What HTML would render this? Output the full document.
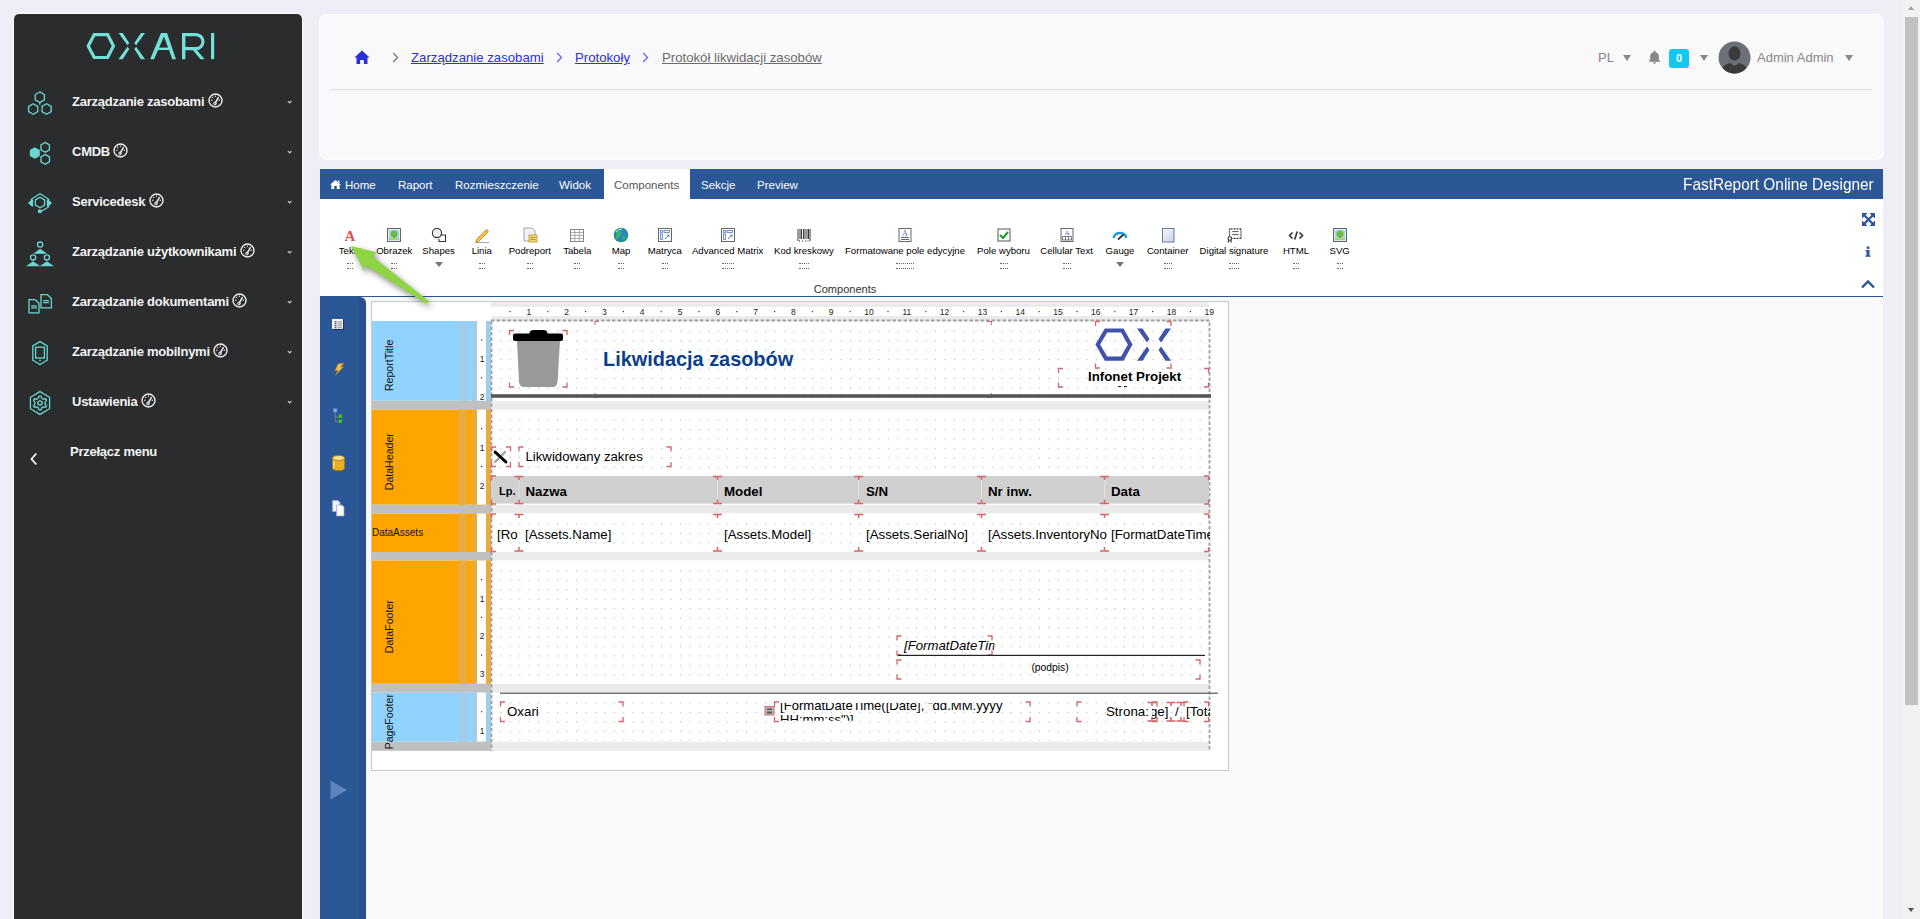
<!DOCTYPE html>
<html><head><meta charset="utf-8">
<style>
*{margin:0;padding:0;box-sizing:border-box}
html,body{width:1920px;height:919px;overflow:hidden;background:#eeeef7;font-family:"Liberation Sans",sans-serif}
.a{position:absolute;white-space:nowrap}
#side{position:absolute;left:14px;top:14px;width:288px;height:920px;background:#2b2c2e;border-radius:5px;box-shadow:0 0 0 1px #fff}
.mi{position:absolute;left:58px;color:#f4f4f4;font-weight:bold;font-size:13px;letter-spacing:-0.25px}
.chev{position:absolute;left:273.5px;width:3.4px;height:3.4px;border-right:1.4px solid #ddd;border-bottom:1.4px solid #ddd;transform:rotate(45deg)}
.ic{position:absolute;left:12px}
.gauge{display:inline-block;vertical-align:-2px;margin-left:0px}
#card{position:absolute;left:320px;top:15px;width:1563px;height:144px;background:#f9f9fb;border-radius:7px;box-shadow:0 0 0 1px #fff}
#bar{position:absolute;left:320px;top:169px;width:1563px;height:30px;background:#2b5797}
.tab{position:absolute;top:1px;height:30px;line-height:30px;color:#fff;font-size:11.5px;white-space:nowrap}
.bc{font-size:13.2px;text-decoration:underline;text-underline-offset:1px}
.tr{font-size:13px;color:#888}
.tri{width:0;height:0;border-left:4px solid transparent;border-right:4px solid transparent;border-top:6px solid #888}
#tb{position:absolute;left:320px;top:199px;width:1563px;height:98px;background:#fff;border-bottom:1px solid #2b5797}
#des{position:absolute;left:320px;top:297px;width:1563px;height:622px;background:#f9f9f9}
#strip{position:absolute;left:320px;top:297px;width:46px;height:622px;background:#2b5797;border-top-right-radius:6px;border-right:7px solid #28508d}
.tl{position:absolute;font-size:9.6px;color:#000;text-align:center;white-space:nowrap}
.dots{position:absolute;height:6px;border-top:1px dotted #666;border-bottom:1px dotted #666}
#sb{position:absolute;left:1903px;top:0;width:17px;height:919px;background:#f1f1f1}
</style></head><body>

<!-- SIDEBAR -->
<div id="side">
  <svg class="a" style="left:0;top:0" width="288" height="60" viewBox="14 14 288 60">
    <g fill="#74e0da">
      <polygon points="94.3,34.6 107.6,34.6 113.5,46 107.6,57.5 94.3,57.5 88.2,46" fill="none" stroke="#74e0da" stroke-width="3.2"/>
      <polygon points="118.5,33 122.7,33 129.3,43 127.5,45.3"/>
      <polygon points="127.5,46.7 129.3,49 122.7,59.2 118.5,59.2"/>
      <polygon points="145.1,33 140.9,33 134.3,43 136.1,45.3"/>
      <polygon points="136.1,46.7 134.3,49 140.9,59.2 145.1,59.2"/>
      <polygon points="161,33 167,33 176,59.2 172.3,59.2 164,36.5 154,59.2 150.2,59.2"/>
      <rect x="156" y="47.6" width="14" height="2.4"/>
      <path d="M182,33 h14 a8.6,8.6 0 0 1 0,17.2 h-10.6 v9 h-3.4 z M185.4,36.2 v10.8 h10.6 a5.4,5.4 0 0 0 0,-10.8 z" fill-rule="evenodd"/>
      <polygon points="192,49 196,49 204.6,59.2 200.4,59.2"/>
      <rect x="211" y="33" width="3.2" height="26.2"/>
    </g>
  </svg>

  <!-- icons -->
  <svg class="a" style="left:0;top:0" width="288" height="460" viewBox="14 14 288 460" fill="none" stroke="#6ad8d2" stroke-width="1.3">
    <g>
      <polygon points="39.80,91.90 44.39,94.55 44.39,99.85 39.80,102.50 35.21,99.85 35.21,94.55"/>
      <polygon points="33.20,103.70 37.79,106.35 37.79,111.65 33.20,114.30 28.61,111.65 28.61,106.35"/>
      <polygon points="46.60,103.70 51.19,106.35 51.19,111.65 46.60,114.30 42.01,111.65 42.01,106.35"/>
      <path d="M39.8,102.5 v2.3"/>
    </g>
    <g>
      <polygon points="34.80,148.00 39.13,150.50 39.13,155.50 34.80,158.00 30.47,155.50 30.47,150.50" fill="#6ad8d2"/>
      <polygon points="45.20,142.40 49.44,144.85 49.44,149.75 45.20,152.20 40.96,149.75 40.96,144.85"/>
      <polygon points="45.20,154.40 49.44,156.85 49.44,161.75 45.20,164.20 40.96,161.75 40.96,156.85"/>
    </g>
    <g>
      <path d="M31.5,204 V199 L40,193.8 L48.5,199 V207 L41,211.5"/>
      <polygon points="28,203 31.8,199.6 33.2,199.6 33.2,206.4 31.8,206.4" fill="#6ad8d2" stroke="none"/>
      <polygon points="52,203 48.2,199.6 46.8,199.6 46.8,206.4 48.2,206.4" fill="#6ad8d2" stroke="none"/>
      <polygon points="40.00,197.20 44.59,199.85 44.59,205.15 40.00,207.80 35.41,205.15 35.41,199.85"/>
      <circle cx="39.8" cy="211.3" r="2" fill="#6ad8d2" stroke="none"/>
    </g>
    <g>
      <circle cx="40.1" cy="244.6" r="2.6"/>
      <path d="M35,253.2 L40.1,249.6 L45.2,253.2 Z" fill="#6ad8d2"/>
      <circle cx="33.1" cy="257.4" r="2.6"/>
      <path d="M28,265.6 L33.1,262 L38.2,265.6 Z" fill="#6ad8d2"/>
      <circle cx="46.9" cy="257.4" r="2.6"/>
      <path d="M41.8,265.6 L46.9,262 L52,265.6 Z" fill="#6ad8d2"/>
    </g>
    <g>
      <path d="M29,299.6 h6 l4,3.8 v9.4 h-10 z"/>
      <path d="M31.2,305.8 h5.6 M31.2,307.8 h5.6" stroke-width="1.2"/>
      <path d="M41,294.6 h6.2 l4.2,3.8 v9.4 h-10.4 z"/>
      <path d="M43.2,300.6 h5.8 M43.2,302.6 h5.8" stroke-width="1.2"/>
    </g>
    <g>
      <polygon points="40,341.6 47.2,345.9 47.2,360.2 40,364.5 32.8,360.2 32.8,345.9"/>
      <rect x="35.6" y="347.2" width="8.8" height="10.8"/>
      <path d="M39.2,360.5 h1.6"/>
    </g>
    <g>
      <polygon points="40,391.6 49.6,397.3 49.6,408.7 40,414.4 30.4,408.7 30.4,397.3"/>
      <path d="M39.09,396.06 L40.91,396.06 L41.91,398.38 L43.04,399.03 L45.55,398.74 L46.47,400.32 L44.96,402.35 L44.96,403.65 L46.47,405.68 L45.55,407.26 L43.04,406.97 L41.91,407.62 L40.91,409.94 L39.09,409.94 L38.09,407.62 L36.96,406.97 L34.45,407.26 L33.53,405.68 L35.04,403.65 L35.04,402.35 L33.53,400.32 L34.45,398.74 L36.96,399.03 L38.09,398.38 Z"/>
      <circle cx="40" cy="403" r="2.1"/>
    </g>
    <path d="M36.3,453.5 l-4.8,5.5 l4.8,5.5" stroke="#eee" stroke-width="1.9"/>
  </svg>
  <div class="mi" style="top:79px">Zarządzanie zasobami <svg class="gauge" width="15" height="15" viewBox="0 0 15 15"><circle cx="7.5" cy="7.5" r="6.5" fill="none" stroke="#eee" stroke-width="1.4"/><path d="M7.2,10.2 L10.3,4.6" stroke="#eee" stroke-width="1.5" stroke-linecap="round"/><circle cx="7" cy="10.5" r="1.4" fill="none" stroke="#eee" stroke-width="1"/><circle cx="3.8" cy="7.3" r="0.7" fill="#eee"/><circle cx="4.7" cy="4.5" r="0.7" fill="#eee"/><circle cx="7.5" cy="3.3" r="0.7" fill="#eee"/><circle cx="11.3" cy="7.3" r="0.7" fill="#eee"/></svg></div>
  <div class="mi" style="top:129px">CMDB <svg class="gauge" width="15" height="15" viewBox="0 0 15 15"><circle cx="7.5" cy="7.5" r="6.5" fill="none" stroke="#eee" stroke-width="1.4"/><path d="M7.2,10.2 L10.3,4.6" stroke="#eee" stroke-width="1.5" stroke-linecap="round"/><circle cx="7" cy="10.5" r="1.4" fill="none" stroke="#eee" stroke-width="1"/><circle cx="3.8" cy="7.3" r="0.7" fill="#eee"/><circle cx="4.7" cy="4.5" r="0.7" fill="#eee"/><circle cx="7.5" cy="3.3" r="0.7" fill="#eee"/><circle cx="11.3" cy="7.3" r="0.7" fill="#eee"/></svg></div>
  <div class="mi" style="top:179px">Servicedesk <svg class="gauge" width="15" height="15" viewBox="0 0 15 15"><circle cx="7.5" cy="7.5" r="6.5" fill="none" stroke="#eee" stroke-width="1.4"/><path d="M7.2,10.2 L10.3,4.6" stroke="#eee" stroke-width="1.5" stroke-linecap="round"/><circle cx="7" cy="10.5" r="1.4" fill="none" stroke="#eee" stroke-width="1"/><circle cx="3.8" cy="7.3" r="0.7" fill="#eee"/><circle cx="4.7" cy="4.5" r="0.7" fill="#eee"/><circle cx="7.5" cy="3.3" r="0.7" fill="#eee"/><circle cx="11.3" cy="7.3" r="0.7" fill="#eee"/></svg></div>
  <div class="mi" style="top:229px">Zarządzanie użytkownikami <svg class="gauge" width="15" height="15" viewBox="0 0 15 15"><circle cx="7.5" cy="7.5" r="6.5" fill="none" stroke="#eee" stroke-width="1.4"/><path d="M7.2,10.2 L10.3,4.6" stroke="#eee" stroke-width="1.5" stroke-linecap="round"/><circle cx="7" cy="10.5" r="1.4" fill="none" stroke="#eee" stroke-width="1"/><circle cx="3.8" cy="7.3" r="0.7" fill="#eee"/><circle cx="4.7" cy="4.5" r="0.7" fill="#eee"/><circle cx="7.5" cy="3.3" r="0.7" fill="#eee"/><circle cx="11.3" cy="7.3" r="0.7" fill="#eee"/></svg></div>
  <div class="mi" style="top:279px">Zarządzanie dokumentami <svg class="gauge" width="15" height="15" viewBox="0 0 15 15"><circle cx="7.5" cy="7.5" r="6.5" fill="none" stroke="#eee" stroke-width="1.4"/><path d="M7.2,10.2 L10.3,4.6" stroke="#eee" stroke-width="1.5" stroke-linecap="round"/><circle cx="7" cy="10.5" r="1.4" fill="none" stroke="#eee" stroke-width="1"/><circle cx="3.8" cy="7.3" r="0.7" fill="#eee"/><circle cx="4.7" cy="4.5" r="0.7" fill="#eee"/><circle cx="7.5" cy="3.3" r="0.7" fill="#eee"/><circle cx="11.3" cy="7.3" r="0.7" fill="#eee"/></svg></div>
  <div class="mi" style="top:329px">Zarządzanie mobilnymi <svg class="gauge" width="15" height="15" viewBox="0 0 15 15"><circle cx="7.5" cy="7.5" r="6.5" fill="none" stroke="#eee" stroke-width="1.4"/><path d="M7.2,10.2 L10.3,4.6" stroke="#eee" stroke-width="1.5" stroke-linecap="round"/><circle cx="7" cy="10.5" r="1.4" fill="none" stroke="#eee" stroke-width="1"/><circle cx="3.8" cy="7.3" r="0.7" fill="#eee"/><circle cx="4.7" cy="4.5" r="0.7" fill="#eee"/><circle cx="7.5" cy="3.3" r="0.7" fill="#eee"/><circle cx="11.3" cy="7.3" r="0.7" fill="#eee"/></svg></div>
  <div class="mi" style="top:379px">Ustawienia <svg class="gauge" width="15" height="15" viewBox="0 0 15 15"><circle cx="7.5" cy="7.5" r="6.5" fill="none" stroke="#eee" stroke-width="1.4"/><path d="M7.2,10.2 L10.3,4.6" stroke="#eee" stroke-width="1.5" stroke-linecap="round"/><circle cx="7" cy="10.5" r="1.4" fill="none" stroke="#eee" stroke-width="1"/><circle cx="3.8" cy="7.3" r="0.7" fill="#eee"/><circle cx="4.7" cy="4.5" r="0.7" fill="#eee"/><circle cx="7.5" cy="3.3" r="0.7" fill="#eee"/><circle cx="11.3" cy="7.3" r="0.7" fill="#eee"/></svg></div>
  <div class="mi" style="top:430px;left:56px">Przełącz menu</div>
  <div class="chev" style="top:85.5px"></div>
  <div class="chev" style="top:135.5px"></div>
  <div class="chev" style="top:185.5px"></div>
  <div class="chev" style="top:235.5px"></div>
  <div class="chev" style="top:285.5px"></div>
  <div class="chev" style="top:335.5px"></div>
  <div class="chev" style="top:385.5px"></div>
</div>

<!-- CARD -->
<div id="card"></div>
<svg class="a" style="left:354px;top:50px" width="16" height="15" viewBox="0 0 16 15"><path d="M8,0.6 L15.6,7.6 L13.5,7.6 L13.5,14 L9.8,14 L9.8,10 L6.2,10 L6.2,14 L2.5,14 L2.5,7.6 L0.4,7.6 Z" fill="#2b2fd6"/></svg>
<svg class="a" style="left:392px;top:52px" width="7" height="11" viewBox="0 0 7 11"><path d="M1.2,1 L5.5,5.5 L1.2,10" fill="none" stroke="#777" stroke-width="1.3"/></svg>
<div class="a bc" style="left:411px;top:50px;color:#2b2fd6">Zarządzanie zasobami</div>
<svg class="a" style="left:556px;top:52px" width="7" height="11" viewBox="0 0 7 11"><path d="M1.2,1 L5.5,5.5 L1.2,10" fill="none" stroke="#6a6ae0" stroke-width="1.3"/></svg>
<div class="a bc" style="left:575px;top:50px;color:#2b2fd6">Protokoły</div>
<svg class="a" style="left:642px;top:52px" width="7" height="11" viewBox="0 0 7 11"><path d="M1.2,1 L5.5,5.5 L1.2,10" fill="none" stroke="#6a6ae0" stroke-width="1.3"/></svg>
<div class="a bc" style="left:662px;top:50px;color:#6b6b6b">Protokół likwidacji zasobów</div>
<div class="a" style="left:331px;top:89px;width:1541px;height:1px;background:#dcdde3"></div>
<div class="a tr" style="left:1598px;top:50px">PL</div>
<div class="a tri" style="left:1623px;top:55px"></div>
<svg class="a" style="left:1648px;top:50px" width="13" height="14" viewBox="0 0 13 14"><path d="M6.5,0.6 a1,1 0 0 1 1,1 v0.6 c2.2,0.5 3.4,2.3 3.4,4.5 v3 l1.6,2 h-12 l1.6,-2 v-3 c0,-2.2 1.2,-4 3.4,-4.5 v-0.6 a1,1 0 0 1 1,-1 z M5,12.3 h3 a1.5,1.5 0 0 1 -3,0 z" fill="#888"/></svg>
<div class="a" style="left:1669px;top:49px;width:20px;height:19px;background:#12c8ee;border-radius:3px;color:#fff;font-weight:bold;font-size:11px;text-align:center;line-height:19px">0</div>
<div class="a tri" style="left:1700px;top:55px"></div>
<svg class="a" style="left:1718px;top:41px" width="33" height="33" viewBox="0 0 33 33"><defs><clipPath id="cc"><circle cx="16.5" cy="16.5" r="16"/></clipPath></defs><circle cx="16.5" cy="16.5" r="16" fill="#6c7177"/><g clip-path="url(#cc)" fill="#3a3b3c"><ellipse cx="16.5" cy="12.5" rx="6" ry="7.2"/><path d="M3,33 c0,-8 5,-10 9,-11 l4.5,3 l4.5,-3 c4,1 9,3 9,11 z"/></g></svg>
<div class="a tr" style="left:1757px;top:50px">Admin Admin</div>
<div class="a tri" style="left:1845px;top:55px"></div>

<!-- BAR -->
<div id="bar">
  <svg class="a" style="left:10px;top:11px" width="11" height="9" viewBox="0 0 11 9"><path d="M5.5,0 L11,4.8 L9.6,4.8 L9.6,9 L6.8,9 L6.8,6 L4.2,6 L4.2,9 L1.4,9 L1.4,4.8 L0,4.8 Z M8,0.5 h1.4 v2.5 l-1.4,-1.2z" fill="#fff"/></svg>
  <div class="tab" style="left:25px">Home</div>
  <div class="tab" style="left:78px">Raport</div>
  <div class="tab" style="left:135px">Rozmieszczenie</div>
  <div class="tab" style="left:239px">Widok</div>
  <div class="a" style="left:284px;top:0;width:86px;height:30px;background:#fff"></div>
  <div class="tab" style="left:294px;color:#555">Components</div>
  <div class="tab" style="left:381px">Sekcje</div>
  <div class="tab" style="left:437px">Preview</div>
  <div class="tab" style="left:1362.5px;font-size:17px;transform:scaleX(0.905);transform-origin:0 0;width:211px">FastReport Online Designer</div>
</div>

<!-- TOOLBAR -->
<div id="tb">
<svg class="a" style="left:22.0px;top:28px" width="16" height="16" viewBox="0 0 16 16"><text x="8" y="14" font-family="Liberation Serif" font-weight="bold" font-size="15" fill="#d9534f" text-anchor="middle">A</text></svg>
<div class="tl" style="left:-30.0px;top:46px;width:120px">Tekst</div>
<div class="dots" style="left:27.0px;top:64px;width:6px"></div>
<svg class="a" style="left:66.3px;top:28px" width="16" height="16" viewBox="0 0 16 16"><rect x="1.5" y="1.5" width="13" height="13" fill="#dbe8f5" stroke="#666"/><rect x="3" y="3" width="10" height="10" fill="#a8d8f0"/><circle cx="8" cy="7" r="3.6" fill="#6bbd45"/><rect x="7.3" y="9" width="1.6" height="3" fill="#c47a2c"/><rect x="3" y="11" width="10" height="2" fill="#9ed67a"/></svg>
<div class="tl" style="left:14.3px;top:46px;width:120px">Obrazek</div>
<div class="dots" style="left:71.3px;top:64px;width:6px"></div>
<svg class="a" style="left:110.6px;top:28px" width="16" height="16" viewBox="0 0 16 16"><circle cx="6" cy="6" r="4.6" fill="#eee" stroke="#333" stroke-width="1.1"/><path d="M9.5,8 h5 v6.5 h-6.5 v-2.5" fill="none" stroke="#333" stroke-width="1.1"/></svg>
<div class="tl" style="left:58.6px;top:46px;width:120px">Shapes</div>
<div class="a tri" style="left:114.6px;top:63px;border-top-color:#777;border-top-width:5px"></div>
<svg class="a" style="left:153.8px;top:28px" width="16" height="16" viewBox="0 0 16 16"><path d="M2.5,12.5 L12,3 L14,5 L4.5,14.5 L2,15 Z" fill="#f5c842" stroke="#c58a1a" stroke-width="0.9"/><path d="M12,3 L13,2 L15,4 L14,5z" fill="#e89a6a"/><path d="M1,16 h14" stroke="#555" stroke-width="1"/></svg>
<div class="tl" style="left:101.8px;top:46px;width:120px">Linia</div>
<div class="dots" style="left:158.8px;top:64px;width:6px"></div>
<svg class="a" style="left:201.8px;top:28px" width="16" height="16" viewBox="0 0 16 16"><path d="M2,1 h8 l3,3 v10 h-11z" fill="#eef2fa" stroke="#999" stroke-width="0.9"/><rect x="7" y="8" width="8" height="7" fill="#f5d76e" stroke="#b8962e" stroke-width="0.8"/><path d="M8.5,10.5 h5 M8.5,12.5 h5" stroke="#9a7a1a" stroke-width="0.7"/></svg>
<div class="tl" style="left:149.8px;top:46px;width:120px">Podreport</div>
<div class="dots" style="left:206.8px;top:64px;width:6px"></div>
<svg class="a" style="left:249.3px;top:28px" width="16" height="16" viewBox="0 0 16 16"><rect x="1.5" y="2.5" width="13" height="12" fill="#fff" stroke="#888"/><path d="M1.5,5.5 h13 M1.5,8.5 h13 M1.5,11.5 h13 M5.8,2.5 v12 M10.2,2.5 v12" stroke="#999" stroke-width="0.8"/></svg>
<div class="tl" style="left:197.3px;top:46px;width:120px">Tabela</div>
<div class="dots" style="left:254.3px;top:64px;width:6px"></div>
<svg class="a" style="left:293.0px;top:28px" width="16" height="16" viewBox="0 0 16 16"><circle cx="8" cy="8" r="7.3" fill="#1d9a6c"/><circle cx="8" cy="8" r="6" fill="#2d7fd0"/><path d="M4,4 q3,-1 5,1 q-2,2 -1,4 q-3,1 -4,4 q-2,-4 0,-9z M10,9 q3,0 3,2 q-2,2 -4,2z" fill="#3ab06a"/><path d="M3,5 q2,-3 6,-3" stroke="#bfe" stroke-width="1" fill="none"/></svg>
<div class="tl" style="left:241.0px;top:46px;width:120px">Map</div>
<div class="dots" style="left:298.0px;top:64px;width:6px"></div>
<svg class="a" style="left:336.8px;top:28px" width="16" height="16" viewBox="0 0 16 16"><rect x="1.5" y="1.5" width="13" height="13" fill="#fff" stroke="#666"/><rect x="3.5" y="3.5" width="2" height="2" fill="none" stroke="#4a7ac8" stroke-width="0.8"/><rect x="7" y="3.5" width="5.5" height="2" fill="none" stroke="#4a7ac8" stroke-width="0.8"/><rect x="3.5" y="7" width="2" height="5.5" fill="none" stroke="#4a7ac8" stroke-width="0.8"/><path d="M8,12 l4,-4 m0,0 v2 m0,-2 h-2" stroke="#4a7ac8" stroke-width="0.9" fill="none"/></svg>
<div class="tl" style="left:284.8px;top:46px;width:120px">Matryca</div>
<div class="dots" style="left:341.8px;top:64px;width:6px"></div>
<svg class="a" style="left:399.7px;top:28px" width="16" height="16" viewBox="0 0 16 16"><rect x="1.5" y="1.5" width="13" height="13" fill="#fff" stroke="#666"/><rect x="3.5" y="3.5" width="2" height="2" fill="none" stroke="#4a7ac8" stroke-width="0.8"/><rect x="7" y="3.5" width="5.5" height="2" fill="none" stroke="#4a7ac8" stroke-width="0.8"/><rect x="3.5" y="7" width="2" height="5.5" fill="none" stroke="#4a7ac8" stroke-width="0.8"/><path d="M8,12 l4,-4 m0,0 v2 m0,-2 h-2" stroke="#4a7ac8" stroke-width="0.9" fill="none"/></svg>
<div class="tl" style="left:347.7px;top:46px;width:120px">Advanced Matrix</div>
<div class="dots" style="left:401.7px;top:64px;width:12px"></div>
<svg class="a" style="left:475.9px;top:28px" width="16" height="16" viewBox="0 0 16 16"><path d="M2,2 v12 M4,2 v10 M5.5,2 v10 M7.5,2 v10 M9,2 v10 M11,2 v10 M12.5,2 v10 M14,2 v12" stroke="#222" stroke-width="0.9"/><path d="M3,14 h1 M6,14 h1 M9,14 h1 M11.5,14 h1" stroke="#222" stroke-width="1"/></svg>
<div class="tl" style="left:423.9px;top:46px;width:120px">Kod kreskowy</div>
<div class="dots" style="left:478.9px;top:64px;width:10px"></div>
<svg class="a" style="left:577.0px;top:28px" width="16" height="16" viewBox="0 0 16 16"><rect x="2" y="1.5" width="12" height="13" fill="#fff" stroke="#666"/><text x="8" y="9" font-size="8" text-anchor="middle" fill="#3a6ac8" font-family="Liberation Serif">A</text><path d="M4,10.5 h8 M4,12.5 h8" stroke="#444" stroke-width="0.8"/></svg>
<div class="tl" style="left:525.0px;top:46px;width:120px">Formatowane pole edycyjne</div>
<div class="dots" style="left:576.0px;top:64px;width:18px"></div>
<svg class="a" style="left:675.5px;top:28px" width="16" height="16" viewBox="0 0 16 16"><rect x="2" y="2" width="12" height="12" fill="#fff" stroke="#555"/><path d="M4,8 l3,3 l5,-6" stroke="#1a9a2a" stroke-width="2" fill="none"/></svg>
<div class="tl" style="left:623.5px;top:46px;width:120px">Pole wyboru</div>
<div class="dots" style="left:679.5px;top:64px;width:8px"></div>
<svg class="a" style="left:738.6px;top:28px" width="16" height="16" viewBox="0 0 16 16"><rect x="2" y="1.5" width="12" height="13" fill="#fff" stroke="#666"/><text x="8" y="8" font-size="7" text-anchor="middle" fill="#3a6ac8" font-family="Liberation Serif">A</text><path d="M3.5,9.5 h9 v3.5 h-9 z M6.5,9.5 v3.5 M9.5,9.5 v3.5" stroke="#444" stroke-width="0.7" fill="none"/></svg>
<div class="tl" style="left:686.6px;top:46px;width:120px">Cellular Text</div>
<div class="dots" style="left:742.6px;top:64px;width:8px"></div>
<svg class="a" style="left:792.0px;top:28px" width="16" height="16" viewBox="0 0 16 16"><path d="M1.6,11 a6.6,6.6 0 0 1 12.8,0" stroke="#1a9ae0" stroke-width="2.3" fill="none"/><path d="M6.5,12 L11,8" stroke="#333" stroke-width="1.8" stroke-linecap="round"/></svg>
<div class="tl" style="left:740.0px;top:46px;width:120px">Gauge</div>
<div class="a tri" style="left:796.0px;top:63px;border-top-color:#777;border-top-width:5px"></div>
<svg class="a" style="left:839.7px;top:28px" width="16" height="16" viewBox="0 0 16 16"><defs><linearGradient id="cg" x1="0" y1="0" x2="1" y2="1"><stop offset="0" stop-color="#fafbff"/><stop offset="1" stop-color="#c8d0ea"/></linearGradient></defs><rect x="2.5" y="1.5" width="11.5" height="13.5" fill="url(#cg)" stroke="#6a7a9a"/></svg>
<div class="tl" style="left:787.7px;top:46px;width:120px">Container</div>
<div class="dots" style="left:843.7px;top:64px;width:8px"></div>
<svg class="a" style="left:906.0px;top:28px" width="16" height="16" viewBox="0 0 16 16"><rect x="3.5" y="1.8" width="11.5" height="9.5" fill="#fff" stroke="#333" stroke-width="1.2" stroke-dasharray="1,0.5"/><path d="M6.2,4.6 h6.3 M6.2,7.6 h6.3" stroke="#444" stroke-width="0.9"/><circle cx="3.8" cy="11.5" r="1.8" fill="#fff" stroke="#333" stroke-width="1.1"/><path d="M3,13 l-0.8,2.5 M4.6,13 l0.8,2.5" stroke="#333" stroke-width="1.1"/></svg>
<div class="tl" style="left:854.0px;top:46px;width:120px">Digital signature</div>
<div class="dots" style="left:909.0px;top:64px;width:10px"></div>
<svg class="a" style="left:968.0px;top:28px" width="16" height="16" viewBox="0 0 16 16"><path d="M4.5,5.5 L1.5,8.5 L4.5,11.5 M11.5,5.5 L14.5,8.5 L11.5,11.5" stroke="#333" stroke-width="1.6" fill="none"/><path d="M9.3,4.5 L6.7,12.5" stroke="#333" stroke-width="1.6"/></svg>
<div class="tl" style="left:916.0px;top:46px;width:120px">HTML</div>
<div class="dots" style="left:973.0px;top:64px;width:6px"></div>
<svg class="a" style="left:1011.7px;top:28px" width="16" height="16" viewBox="0 0 16 16"><rect x="1.5" y="1.5" width="13" height="13" fill="#dbe8f5" stroke="#666"/><rect x="3" y="3" width="10" height="10" fill="#a8d8f0"/><circle cx="8" cy="7" r="3.6" fill="#6bbd45"/><rect x="7.3" y="9" width="1.6" height="3" fill="#c47a2c"/><rect x="3" y="11" width="10" height="2" fill="#9ed67a"/></svg>
<div class="tl" style="left:959.7px;top:46px;width:120px">SVG</div>
<div class="dots" style="left:1016.7px;top:64px;width:6px"></div>
<div class="tl" style="left:460px;top:84px;width:130px;font-size:11px;color:#333">Components</div>
<svg class="a" style="left:1542px;top:14px" width="13" height="13" viewBox="0 0 13 13"><path d="M0,0 h5.5 l-5.5,5.5z M13,0 v5.5 l-5.5,-5.5z M0,13 v-5.5 l5.5,5.5z M13,13 h-5.5 l5.5,-5.5z" fill="#2b5797"/><path d="M2,2 L11,11 M11,2 L2,11" stroke="#2b5797" stroke-width="2.3"/></svg>
<svg class="a" style="left:1544px;top:47px" width="8" height="11" viewBox="0 0 8 11"><rect x="2.8" y="0.5" width="2.6" height="2.4" fill="#2b5797"/><path d="M1.5,4 h4 v5.5 h1.2 v1.2 h-5.4 v-1.2 h1.2 v-4.3 h-1z" fill="#2b5797"/></svg>
<svg class="a" style="left:1541px;top:80px" width="14" height="10" viewBox="0 0 14 10"><path d="M1,8.5 l6,-6 l6,6" fill="none" stroke="#2b5797" stroke-width="2.4"/></svg>
</div>

<!-- DESIGN AREA -->
<div id="des"></div>
<div id="strip"></div>
<svg class="a" style="left:320px;top:297px" width="50" height="520" viewBox="320 297 50 520">
  <g>
    <rect x="332" y="319" width="12" height="11" fill="#1e2a6e"/>
    <rect x="332" y="319" width="11" height="10" fill="#f4f8ff"/>
    <path d="M334.5,321.8 h2 M334.5,323.8 h2 M334.5,325.8 h2 M334.5,327.8 h2" stroke="#222" stroke-width="1.1"/>
    <path d="M337.5,321.8 h4.5 M337.5,323.8 h4.5 M337.5,325.8 h4.5 M337.5,327.8 h4.5" stroke="#888" stroke-width="1"/>
  </g>
  <path d="M338,364 l6,-1 l-3.5,4 l3,-0.3 l-8,8.5 l2.5,-5 l-3,0.5 z" fill="#f3c44a" stroke="#c07a20" stroke-width="0.6"/>
  <g>
    <rect x="333.5" y="408.5" width="3.5" height="3.5" fill="#7ab0f0" stroke="#4a80d0" stroke-width="0.5"/>
    <path d="M335.3,412 v9.5 h3 M335.3,417 h3" stroke="#888" stroke-width="0.8" fill="none"/>
    <rect x="338.5" y="414.5" width="3.5" height="3.5" fill="#44c044" stroke="#2a8a2a" stroke-width="0.5"/>
    <rect x="338.5" y="419.5" width="3.5" height="3.5" fill="#44c044" stroke="#2a8a2a" stroke-width="0.5"/>
  </g>
  <g>
    <path d="M332.5,458 v10 q0,2.5 6,2.5 q6,0 6,-2.5 v-10 z" fill="#e8b020" stroke="#b07a10" stroke-width="0.8"/>
    <ellipse cx="338.5" cy="458" rx="6" ry="2.5" fill="#f8e08a" stroke="#b07a10" stroke-width="0.8"/>
    <path d="M334,461 v7" stroke="#fbe9a0" stroke-width="1.2"/>
  </g>
  <g>
    <path d="M332.5,500.5 h5.5 l2,2 v9 h-7.5 z" fill="#f0f4fa" stroke="#9aa8c0" stroke-width="0.7"/>
    <path d="M336.5,505 h5.5 l2,2 v9 h-7.5 z" fill="#f8fbff" stroke="#9aa8c0" stroke-width="0.7"/>
  </g>
  <path d="M330.5,780.5 L347,790 L330.5,799.5 Z" fill="#5f84bd"/>
</svg>
<!--CANVAS-->
<svg class="a" style="left:0;top:0" width="1920" height="919" viewBox="0 0 1920 919" font-family="Liberation Sans">
<defs><pattern id="grid" x="490.9" y="0" width="9.45" height="9.45" patternUnits="userSpaceOnUse"><rect x="0" y="0" width="1.1" height="1.1" fill="#b0b0b0"/></pattern></defs>
<rect x="371.5" y="301.5" width="857" height="469" fill="#fff" stroke="#c9c9c9"/>
<rect x="491" y="302" width="718" height="5" fill="#ebebeb"/>
<rect x="491" y="316" width="718" height="5" fill="#ebebeb"/>
<text x="528.8" y="314.8" font-size="8.5" text-anchor="middle" fill="#222">1</text>
<rect x="509.4" y="311" width="1.2" height="1.2" fill="#333"/>
<text x="566.6" y="314.8" font-size="8.5" text-anchor="middle" fill="#222">2</text>
<rect x="547.2" y="311" width="1.2" height="1.2" fill="#333"/>
<text x="604.4" y="314.8" font-size="8.5" text-anchor="middle" fill="#222">3</text>
<rect x="585.0" y="311" width="1.2" height="1.2" fill="#333"/>
<text x="642.2" y="314.8" font-size="8.5" text-anchor="middle" fill="#222">4</text>
<rect x="622.8" y="311" width="1.2" height="1.2" fill="#333"/>
<text x="680.0" y="314.8" font-size="8.5" text-anchor="middle" fill="#222">5</text>
<rect x="660.6" y="311" width="1.2" height="1.2" fill="#333"/>
<text x="717.8" y="314.8" font-size="8.5" text-anchor="middle" fill="#222">6</text>
<rect x="698.4" y="311" width="1.2" height="1.2" fill="#333"/>
<text x="755.6" y="314.8" font-size="8.5" text-anchor="middle" fill="#222">7</text>
<rect x="736.2" y="311" width="1.2" height="1.2" fill="#333"/>
<text x="793.4" y="314.8" font-size="8.5" text-anchor="middle" fill="#222">8</text>
<rect x="774.0" y="311" width="1.2" height="1.2" fill="#333"/>
<text x="831.2" y="314.8" font-size="8.5" text-anchor="middle" fill="#222">9</text>
<rect x="811.8" y="311" width="1.2" height="1.2" fill="#333"/>
<text x="869.0" y="314.8" font-size="8.5" text-anchor="middle" fill="#222">10</text>
<rect x="849.6" y="311" width="1.2" height="1.2" fill="#333"/>
<text x="906.8" y="314.8" font-size="8.5" text-anchor="middle" fill="#222">11</text>
<rect x="887.4" y="311" width="1.2" height="1.2" fill="#333"/>
<text x="944.6" y="314.8" font-size="8.5" text-anchor="middle" fill="#222">12</text>
<rect x="925.2" y="311" width="1.2" height="1.2" fill="#333"/>
<text x="982.4" y="314.8" font-size="8.5" text-anchor="middle" fill="#222">13</text>
<rect x="963.0" y="311" width="1.2" height="1.2" fill="#333"/>
<text x="1020.2" y="314.8" font-size="8.5" text-anchor="middle" fill="#222">14</text>
<rect x="1000.8" y="311" width="1.2" height="1.2" fill="#333"/>
<text x="1058.0" y="314.8" font-size="8.5" text-anchor="middle" fill="#222">15</text>
<rect x="1038.6" y="311" width="1.2" height="1.2" fill="#333"/>
<text x="1095.8" y="314.8" font-size="8.5" text-anchor="middle" fill="#222">16</text>
<rect x="1076.4" y="311" width="1.2" height="1.2" fill="#333"/>
<text x="1133.6" y="314.8" font-size="8.5" text-anchor="middle" fill="#222">17</text>
<rect x="1114.2" y="311" width="1.2" height="1.2" fill="#333"/>
<text x="1171.4" y="314.8" font-size="8.5" text-anchor="middle" fill="#222">18</text>
<rect x="1152.0" y="311" width="1.2" height="1.2" fill="#333"/>
<text x="1209.2" y="314.8" font-size="8.5" text-anchor="middle" fill="#222">19</text>
<rect x="1189.8" y="311" width="1.2" height="1.2" fill="#333"/>
<rect x="372" y="321" width="119" height="79.80" fill="#8fd3fe"/>
<rect x="458" y="321" width="9" height="79.80000000000001" fill="#9fcdeb"/>
<rect x="472" y="321" width="5" height="79.80000000000001" fill="#9fcdeb"/>
<rect x="477" y="321" width="9" height="79.80000000000001" fill="#fff"/>
<rect x="486" y="321" width="5" height="79.80000000000001" fill="#9fcdeb"/>
<rect x="372" y="400.8" width="119" height="8.90" fill="#c0c0c0"/>
<rect x="491" y="400.8" width="718" height="8.90" fill="#ebebeb"/>
<rect x="491" y="321" width="718" height="79.80000000000001" fill="#fff"/>
<g transform="translate(0,321.3)"><rect x="496" y="5" width="713" height="73.80000000000001" fill="url(#grid)"/></g>
<rect x="481" y="339.4" width="1.2" height="1.2" fill="#333"/>
<text x="482" y="362.0" font-size="8.5" text-anchor="middle" fill="#222">1</text>
<rect x="481" y="377.2" width="1.2" height="1.2" fill="#333"/>
<text x="482" y="399.8" font-size="8.5" text-anchor="middle" fill="#222">2</text>
<text transform="translate(393,365.4) rotate(-90)" font-size="10.6" text-anchor="middle" fill="#111">ReportTitle</text>
<rect x="372" y="409.7" width="119" height="95.00" fill="#ffa500"/>
<rect x="458" y="409.7" width="9" height="95.0" fill="#e9ac3c"/>
<rect x="472" y="409.7" width="5" height="95.0" fill="#e9ac3c"/>
<rect x="477" y="409.7" width="9" height="95.0" fill="#fff"/>
<rect x="486" y="409.7" width="5" height="95.0" fill="#e9ac3c"/>
<rect x="372" y="504.7" width="119" height="8.90" fill="#c0c0c0"/>
<rect x="491" y="504.7" width="718" height="8.90" fill="#ebebeb"/>
<rect x="491" y="409.7" width="718" height="95.0" fill="#fff"/>
<g transform="translate(0,410.0)"><rect x="496" y="5" width="713" height="89.0" fill="url(#grid)"/></g>
<rect x="481" y="428.1" width="1.2" height="1.2" fill="#333"/>
<text x="482" y="450.7" font-size="8.5" text-anchor="middle" fill="#222">1</text>
<rect x="481" y="465.9" width="1.2" height="1.2" fill="#333"/>
<text x="482" y="488.5" font-size="8.5" text-anchor="middle" fill="#222">2</text>
<text transform="translate(393,461.7) rotate(-90)" font-size="10.6" text-anchor="middle" fill="#111">DataHeader</text>
<rect x="372" y="513.6" width="119" height="38.40" fill="#ffa500"/>
<rect x="458" y="513.6" width="9" height="38.39999999999998" fill="#e9ac3c"/>
<rect x="472" y="513.6" width="5" height="38.39999999999998" fill="#e9ac3c"/>
<rect x="477" y="513.6" width="9" height="38.39999999999998" fill="#fff"/>
<rect x="486" y="513.6" width="5" height="38.39999999999998" fill="#e9ac3c"/>
<rect x="372" y="552" width="119" height="8.60" fill="#c0c0c0"/>
<rect x="491" y="552" width="718" height="8.60" fill="#ebebeb"/>
<rect x="491" y="513.6" width="718" height="38.39999999999998" fill="#fff"/>
<g transform="translate(0,513.9)"><rect x="496" y="5" width="713" height="32.39999999999998" fill="url(#grid)"/></g>
<text x="372" y="536.3" font-size="10" fill="#111">DataAssets</text>
<rect x="372" y="560.6" width="119" height="123.20" fill="#ffa500"/>
<rect x="458" y="560.6" width="9" height="123.19999999999993" fill="#e9ac3c"/>
<rect x="472" y="560.6" width="5" height="123.19999999999993" fill="#e9ac3c"/>
<rect x="477" y="560.6" width="9" height="123.19999999999993" fill="#fff"/>
<rect x="486" y="560.6" width="5" height="123.19999999999993" fill="#e9ac3c"/>
<rect x="372" y="683.8" width="119" height="8.90" fill="#c0c0c0"/>
<rect x="491" y="683.8" width="718" height="8.90" fill="#ebebeb"/>
<rect x="491" y="560.6" width="718" height="123.19999999999993" fill="#fff"/>
<g transform="translate(0,560.9)"><rect x="496" y="5" width="713" height="117.19999999999993" fill="url(#grid)"/></g>
<rect x="481" y="579.0" width="1.2" height="1.2" fill="#333"/>
<text x="482" y="601.6" font-size="8.5" text-anchor="middle" fill="#222">1</text>
<rect x="481" y="616.8" width="1.2" height="1.2" fill="#333"/>
<text x="482" y="639.4" font-size="8.5" text-anchor="middle" fill="#222">2</text>
<rect x="481" y="654.6" width="1.2" height="1.2" fill="#333"/>
<text x="482" y="677.2" font-size="8.5" text-anchor="middle" fill="#222">3</text>
<text transform="translate(393,626.7) rotate(-90)" font-size="10.6" text-anchor="middle" fill="#111">DataFooter</text>
<rect x="372" y="692.7" width="119" height="49.00" fill="#8fd3fe"/>
<rect x="458" y="692.7" width="9" height="49.0" fill="#9fcdeb"/>
<rect x="472" y="692.7" width="5" height="49.0" fill="#9fcdeb"/>
<rect x="477" y="692.7" width="9" height="49.0" fill="#fff"/>
<rect x="486" y="692.7" width="5" height="49.0" fill="#9fcdeb"/>
<rect x="372" y="741.7" width="119" height="9.10" fill="#c0c0c0"/>
<rect x="491" y="741.7" width="718" height="9.10" fill="#ebebeb"/>
<rect x="491" y="692.7" width="718" height="49.0" fill="#fff"/>
<g transform="translate(0,693.0)"><rect x="496" y="5" width="713" height="43.0" fill="url(#grid)"/></g>
<rect x="481" y="711.1" width="1.2" height="1.2" fill="#333"/>
<text x="482" y="733.7" font-size="8.5" text-anchor="middle" fill="#222">1</text>
<text transform="translate(393,721.7) rotate(-90)" font-size="10.6" text-anchor="middle" fill="#111">PageFooter</text>
<g font-family="Liberation Sans">
<path d="M491.5,321 V751 M491,320.5 H1209.5 V751" fill="none" stroke="#a0a0a0" stroke-width="1.8" stroke-dasharray="3.5,2"/>
<path d="M529.5,334 q0,-4 4,-4 h10 q4,0 4,4 z" fill="#000"/>
<rect x="513" y="333.5" width="50" height="7.5" rx="2" fill="#000"/>
<path d="M517,341 H560 L557.5,382 q-0.4,5 -5,5 H524 q-4.6,0 -5,-5 Z" fill="#999"/>
<path d="M509.5,335.0 V330.5 H514.0 M562.5,330.5 H567 V335.0 M567,382.5 V387 H562.5 M514.0,387 H509.5 V382.5" fill="none" stroke="#d46a6a" stroke-width="1.35"/>
<path d="M595,325 V321.5 H599 M595,393 V397.5 H599 M987,321.5 H991.5 V325 M991.5,393 V397.5 H987" fill="none" stroke="#d46a6a" stroke-width="1.1"/>
<text x="603" y="365.9" font-size="19.9" font-weight="bold" fill="#0b3e8c">Likwidacja zasobów</text>
<g fill="#4152a9"><polygon points="1106,330.5 1122.3,330.5 1130.2,344.55 1122.3,358.6 1106,358.6 1097.8,344.55" fill="none" stroke="#4152a9" stroke-width="4.1"/><polygon points="1137,328.5 1142.5,328.5 1149.5,339 1147,342.5"/><polygon points="1147,346.5 1149.5,350 1142.5,360.7 1137,360.7"/><polygon points="1171,328.5 1165.5,328.5 1158.5,339 1161,342.5"/><polygon points="1161,346.5 1158.5,350 1165.5,360.7 1171,360.7"/></g>
<path d="M1095.5,326.0 V321.5 H1100.0 M1166.5,321.5 H1171 V326.0 M1171,363.5 V368 H1166.5 M1100.0,368 H1095.5 V363.5" fill="none" stroke="#d46a6a" stroke-width="1.35"/>
<text x="1088" y="380.5" font-size="13.3" font-weight="bold" fill="#000">Infonet Projekt</text>
<rect x="1118" y="386" width="3" height="1" fill="#222"/><rect x="1124" y="386" width="3" height="1" fill="#222"/>
<path d="M1058.5,373.0 V368.5 H1063.0 M1204.0,368.5 H1208.5 V373.0 M1208.5,382.5 V387 H1204.0 M1063.0,387 H1058.5 V382.5" fill="none" stroke="#d46a6a" stroke-width="1.35"/>
<rect x="491" y="394.2" width="720" height="3.6" fill="#575757"/>
<path d="M495,452 L506,462" stroke="#000" stroke-width="2.6" stroke-linecap="round"/><path d="M505,452 L495,462" stroke="#999" stroke-width="2.4" stroke-linecap="round" opacity="0.9"/>
<path d="M495,452 L506,462" stroke="#000" stroke-width="2.6" stroke-linecap="round"/>
<path d="M491.5,451.5 V447 H496.0 M506.0,447 H510.5 V451.5 M510.5,462.0 V466.5 H506.0 M496.0,466.5 H491.5 V462.0" fill="none" stroke="#d46a6a" stroke-width="1.35"/>
<text x="525.5" y="460.8" font-size="13.2" fill="#000">Likwidowany zakres</text>
<path d="M519,451.5 V447 H523.5 M666.5,447 H671 V451.5 M671,462.0 V466.5 H666.5 M523.5,466.5 H519 V462.0" fill="none" stroke="#d46a6a" stroke-width="1.35"/>
<rect x="491" y="476" width="718" height="27.6" fill="#d0d0d0"/>
<rect x="518.5" y="477" width="1" height="26" fill="#e2e2e2"/>
<rect x="717.0" y="477" width="1" height="26" fill="#e2e2e2"/>
<rect x="858.2" y="477" width="1" height="26" fill="#e2e2e2"/>
<rect x="981.0" y="477" width="1" height="26" fill="#e2e2e2"/>
<rect x="1104.0" y="477" width="1" height="26" fill="#e2e2e2"/>
<text x="499" y="494.5" font-size="11" font-weight="bold" fill="#000">Lp.</text>
<text x="525.5" y="496" font-size="13.3" font-weight="bold" fill="#000">Nazwa</text>
<text x="724" y="496" font-size="13.3" font-weight="bold" fill="#000">Model</text>
<text x="866" y="496" font-size="13.3" font-weight="bold" fill="#000">S/N</text>
<text x="988" y="496" font-size="13.3" font-weight="bold" fill="#000">Nr inw.</text>
<text x="1111" y="496" font-size="13.3" font-weight="bold" fill="#000">Data</text>
<rect x="514.5" y="475.7" width="9" height="1.6" fill="#d46a6a"/><rect x="518.2" y="476.5" width="1.6" height="3.5" fill="#d46a6a"/>
<rect x="514.5" y="502.7" width="9" height="1.6" fill="#d46a6a"/><rect x="518.2" y="499.5" width="1.6" height="3.5" fill="#d46a6a"/>
<rect x="713.0" y="475.7" width="9" height="1.6" fill="#d46a6a"/><rect x="716.7" y="476.5" width="1.6" height="3.5" fill="#d46a6a"/>
<rect x="713.0" y="502.7" width="9" height="1.6" fill="#d46a6a"/><rect x="716.7" y="499.5" width="1.6" height="3.5" fill="#d46a6a"/>
<rect x="854.2" y="475.7" width="9" height="1.6" fill="#d46a6a"/><rect x="857.9000000000001" y="476.5" width="1.6" height="3.5" fill="#d46a6a"/>
<rect x="854.2" y="502.7" width="9" height="1.6" fill="#d46a6a"/><rect x="857.9000000000001" y="499.5" width="1.6" height="3.5" fill="#d46a6a"/>
<rect x="977.0" y="475.7" width="9" height="1.6" fill="#d46a6a"/><rect x="980.7" y="476.5" width="1.6" height="3.5" fill="#d46a6a"/>
<rect x="977.0" y="502.7" width="9" height="1.6" fill="#d46a6a"/><rect x="980.7" y="499.5" width="1.6" height="3.5" fill="#d46a6a"/>
<rect x="1100.0" y="475.7" width="9" height="1.6" fill="#d46a6a"/><rect x="1103.7" y="476.5" width="1.6" height="3.5" fill="#d46a6a"/>
<rect x="1100.0" y="502.7" width="9" height="1.6" fill="#d46a6a"/><rect x="1103.7" y="499.5" width="1.6" height="3.5" fill="#d46a6a"/>
<path d="M491.5,480.5 V476 H496.0 M1204.0,476 H1208.5 V480.5 M1208.5,499.5 V504 H1204.0 M496.0,504 H491.5 V499.5" fill="none" stroke="#d46a6a" stroke-width="1.35"/>
<clipPath id="c1"><rect x="491" y="514" width="27" height="38"/></clipPath>
<clipPath id="c5"><rect x="980" y="514" width="127" height="38"/></clipPath>
<clipPath id="c6"><rect x="1104" y="514" width="106" height="38"/></clipPath>
<text x="497" y="539.2" font-size="13.3" fill="#000" clip-path="url(#c1)">[Row#]</text>
<text x="525" y="539.2" font-size="13.3" fill="#000">[Assets.Name]</text>
<text x="724" y="539.2" font-size="13.3" fill="#000">[Assets.Model]</text>
<text x="866" y="539.2" font-size="13.3" fill="#000">[Assets.SerialNo]</text>
<text x="988" y="539.2" font-size="13.3" fill="#000" clip-path="url(#c5)">[Assets.InventoryNo]</text>
<text x="1111" y="539.2" font-size="13.3" fill="#000" clip-path="url(#c6)">[FormatDateTime([Assets.Date])]</text>
<rect x="514.5" y="513.7" width="9" height="1.6" fill="#d46a6a"/><rect x="518.2" y="514.5" width="1.6" height="3.5" fill="#d46a6a"/>
<rect x="514.5" y="550.2" width="9" height="1.6" fill="#d46a6a"/><rect x="518.2" y="547" width="1.6" height="3.5" fill="#d46a6a"/>
<rect x="713.0" y="513.7" width="9" height="1.6" fill="#d46a6a"/><rect x="716.7" y="514.5" width="1.6" height="3.5" fill="#d46a6a"/>
<rect x="713.0" y="550.2" width="9" height="1.6" fill="#d46a6a"/><rect x="716.7" y="547" width="1.6" height="3.5" fill="#d46a6a"/>
<rect x="854.2" y="513.7" width="9" height="1.6" fill="#d46a6a"/><rect x="857.9000000000001" y="514.5" width="1.6" height="3.5" fill="#d46a6a"/>
<rect x="854.2" y="550.2" width="9" height="1.6" fill="#d46a6a"/><rect x="857.9000000000001" y="547" width="1.6" height="3.5" fill="#d46a6a"/>
<rect x="977.0" y="513.7" width="9" height="1.6" fill="#d46a6a"/><rect x="980.7" y="514.5" width="1.6" height="3.5" fill="#d46a6a"/>
<rect x="977.0" y="550.2" width="9" height="1.6" fill="#d46a6a"/><rect x="980.7" y="547" width="1.6" height="3.5" fill="#d46a6a"/>
<rect x="1100.0" y="513.7" width="9" height="1.6" fill="#d46a6a"/><rect x="1103.7" y="514.5" width="1.6" height="3.5" fill="#d46a6a"/>
<rect x="1100.0" y="550.2" width="9" height="1.6" fill="#d46a6a"/><rect x="1103.7" y="547" width="1.6" height="3.5" fill="#d46a6a"/>
<path d="M491.5,518.5 V514 H496.0 M1204.0,514 H1208.5 V518.5 M1208.5,547.0 V551.5 H1204.0 M496.0,551.5 H491.5 V547.0" fill="none" stroke="#d46a6a" stroke-width="1.35"/>
<clipPath id="c7"><rect x="898" y="634" width="96.5" height="22"/></clipPath>
<text x="904" y="649.5" font-size="13.2" font-style="italic" fill="#000" clip-path="url(#c7)">[FormatDateTime([Date])]</text>
<path d="M897,640.5 V636 H901.5 M987.5,636 H992 V640.5 M992,650.5 V655 H987.5 M901.5,655 H897 V650.5" fill="none" stroke="#d46a6a" stroke-width="1.35"/>
<rect x="898" y="654.8" width="307" height="1.2" fill="#222"/>
<text x="1050" y="670.5" font-size="10.3" text-anchor="middle" fill="#000">(podpis)</text>
<path d="M897,664.5 V660 H901.5 M1195.5,660 H1200 V664.5 M1200,674.5 V679 H1195.5 M901.5,679 H897 V674.5" fill="none" stroke="#d46a6a" stroke-width="1.35"/>
<rect x="500" y="692.6" width="718" height="1.2" fill="#555"/>
<text x="507" y="715.6" font-size="13.3" fill="#000">Oxari</text>
<path d="M500.5,706.5 V702 H505.0 M618.5,702 H623 V706.5 M623,717.0 V721.5 H618.5 M505.0,721.5 H500.5 V717.0" fill="none" stroke="#d46a6a" stroke-width="1.35"/>
<clipPath id="c8"><rect x="776" y="703" width="254" height="17.8"/></clipPath>
<g clip-path="url(#c8)"><text x="780" y="709.8" font-size="13.1" fill="#000">[FormatDateTime([Date], "dd.MM.yyyy</text><text x="780" y="724.3" font-size="13.1" fill="#000">HH:mm:ss")]</text></g>
<rect x="765" y="706.5" width="9" height="8.5" fill="#bbb" stroke="#d46a6a" stroke-width="1"/><rect x="767" y="708.5" width="5" height="1.5" fill="#555"/><rect x="767" y="711.5" width="5" height="2" fill="#555"/>
<path d="M774.5,706.5 V702 H779.0 M1025.5,702 H1030 V706.5 M1030,717.0 V721.5 H1025.5 M779.0,721.5 H774.5 V717.0" fill="none" stroke="#d46a6a" stroke-width="1.35"/>
<path d="M1077,706.5 V702 H1081.5 M1152.5,702 H1157 V706.5 M1157,717.0 V721.5 H1152.5 M1081.5,721.5 H1077 V717.0" fill="none" stroke="#d46a6a" stroke-width="1.35"/>
<text x="1106" y="715.5" font-size="13.3" fill="#000">Strona:</text>
<clipPath id="c9"><rect x="1152" y="701" width="18" height="20"/></clipPath>
<text x="1130" y="715.5" font-size="13.3" fill="#000" clip-path="url(#c9)">[Page]</text>
<rect x="1147.5" y="701.7" width="9" height="1.6" fill="#d46a6a"/><rect x="1151.2" y="702.5" width="1.6" height="3.5" fill="#d46a6a"/>
<rect x="1147.5" y="720.2" width="9" height="1.6" fill="#d46a6a"/><rect x="1151.2" y="717" width="1.6" height="3.5" fill="#d46a6a"/>
<text x="1175" y="715.5" font-size="13.3" fill="#000">/</text>
<rect x="1166.5" y="701.7" width="9" height="1.6" fill="#d46a6a"/><rect x="1170.2" y="702.5" width="1.6" height="3.5" fill="#d46a6a"/>
<rect x="1166.5" y="720.2" width="9" height="1.6" fill="#d46a6a"/><rect x="1170.2" y="717" width="1.6" height="3.5" fill="#d46a6a"/>
<rect x="1176.5" y="701.7" width="9" height="1.6" fill="#d46a6a"/><rect x="1180.2" y="702.5" width="1.6" height="3.5" fill="#d46a6a"/>
<rect x="1176.5" y="720.2" width="9" height="1.6" fill="#d46a6a"/><rect x="1180.2" y="717" width="1.6" height="3.5" fill="#d46a6a"/>
<clipPath id="c10"><rect x="1184" y="701" width="26" height="20"/></clipPath>
<text x="1186" y="715.5" font-size="13.3" fill="#000" clip-path="url(#c10)">[TotalPages]</text>
<path d="M1184,706.5 V702 H1188.5 M1204.0,702 H1208.5 V706.5 M1208.5,717.0 V721.5 H1204.0 M1188.5,721.5 H1184 V717.0" fill="none" stroke="#d46a6a" stroke-width="1.35"/>
</g></svg>
<!--/CANVAS-->

<!--ARROW-->
<svg class="a" style="left:330px;top:230px" width="120" height="90" viewBox="330 230 120 90">
  <defs><filter id="sh" x="-30%" y="-30%" width="160%" height="160%"><feGaussianBlur stdDeviation="3"/></filter></defs>
  <polygon points="353,249 379,255 374.5,259 431.5,305 428,306.5 367,268 366.3,274" fill="#000" opacity="0.45" filter="url(#sh)"/>
  <polygon points="351,246 377,252.5 372.5,256.5 429.5,301.8 426,303.6 365,265 364.3,271" fill="#8fd444"/>
</svg>
<!-- SCROLLBAR -->
<div id="sb">
  <div class="a" style="left:2px;top:17px;width:13px;height:688px;background:#c1c1c1"></div>
  <div class="a" style="left:4.5px;top:6px;width:0;height:0;border-left:3.5px solid transparent;border-right:3.5px solid transparent;border-bottom:4px solid #a3a3a3"></div>
  <div class="a" style="left:4.5px;top:908px;width:0;height:0;border-left:3.5px solid transparent;border-right:3.5px solid transparent;border-top:4px solid #505050"></div>
</div>

</body></html>
